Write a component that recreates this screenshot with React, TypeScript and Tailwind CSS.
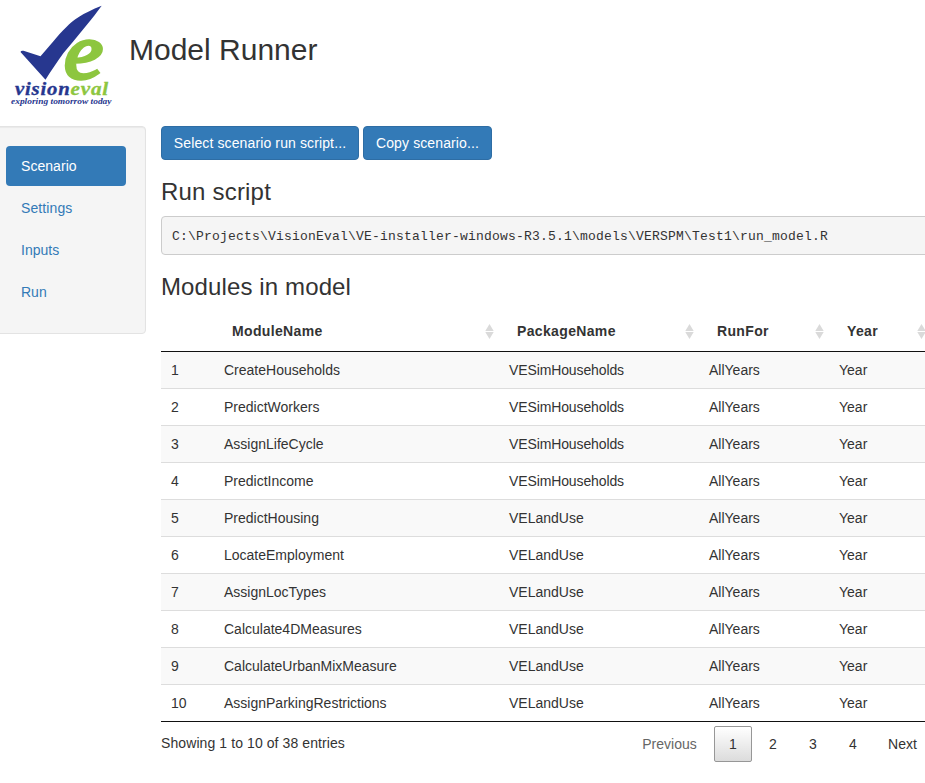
const modules: [string, string][] = [
  ["CreateHouseholds", "VESimHouseholds"],
  ["PredictWorkers", "VESimHouseholds"],
  ["AssignLifeCycle", "VESimHouseholds"],
  ["PredictIncome", "VESimHouseholds"],
  ["PredictHousing", "VELandUse"],
  ["LocateEmployment", "VELandUse"],
  ["AssignLocTypes", "VELandUse"],
  ["Calculate4DMeasures", "VELandUse"],
  ["CalculateUrbanMixMeasure", "VELandUse"],
  ["AssignParkingRestrictions", "VELandUse"],
];

const grid = "grid grid-cols-[53px_285px_200px_130px_102px]";

function Logo() {
  return (
    <svg width="120" height="110" viewBox="0 0 120 110" className="shrink-0 font-['Liberation_Serif',serif]">
      <path
        fill="#27378f"
        d="M101.7 5.8C97 12 92 19 86.7 25L73 41.7L63.5 53C57 62 51 71 45.5 79.7L20.5 52Q21 50.3 23.5 50.8L40.5 56.3L53 41.7C57 37 62 31 66.7 26.7C73 20.5 82 13.5 101.7 5.8Z"
      />
      <text x="64" y="77.5" fontSize="79" fontStyle="italic" fill="#8dc63f" stroke="#8dc63f" strokeWidth="3.5" textLength="39" lengthAdjust="spacingAndGlyphs">e</text>
      <text x="15" y="94.7" fontSize="18.5" fontWeight="bold" fontStyle="italic" fill="#27378f" stroke="#27378f" strokeWidth="0.3" letterSpacing="0.7" textLength="55.5" lengthAdjust="spacingAndGlyphs">vision</text>
      <text x="70.5" y="94.7" fontSize="18.5" fontWeight="bold" fontStyle="italic" fill="#8dc63f" stroke="#8dc63f" strokeWidth="0.3" letterSpacing="0.7" textLength="38.5" lengthAdjust="spacingAndGlyphs">eval</text>
      <text x="11" y="103.7" fontSize="9" fontWeight="bold" fontStyle="italic" fill="#27378f" textLength="100.5" lengthAdjust="spacingAndGlyphs">exploring tomorrow today</text>
    </svg>
  );
}

function HeadCell({ label }: { label: string }) {
  return (
    <div className="flex items-center justify-between pl-[18px] pr-[5px]">
      <span>{label}</span>
      <svg width="9" height="15" viewBox="0 0 9 15" fill="#dadada">
        <path d="M4.5 0L8.7 7H0.3Z M0.3 8H8.7L4.5 15Z" />
      </svg>
    </div>
  );
}

export default function App() {
  return (
    <div className="h-[783px] w-[925px] overflow-hidden bg-white font-['Liberation_Sans',Arial,sans-serif] text-[14px] leading-[20px] text-[#333333]">
      <header className="flex h-[126px]">
        <Logo />
        <h1 className="ml-[9px] mt-[33px] text-[30px] leading-[33px]">Model Runner</h1>
      </header>
      <div className="flex items-start">
        <nav className="-ml-[14px] flex h-[208px] w-[160px] shrink-0 flex-col gap-[2px] rounded border border-[#e3e3e3] bg-[#f5f5f5] px-[19px] pt-[19px] text-[#337ab7] shadow-[inset_0_1px_1px_rgba(0,0,0,0.05)]">
          <a className="rounded bg-[#337ab7] px-[15px] py-[10px] tracking-[0.05px] text-white">Scenario</a>
          <a className="px-[15px] py-[10px] tracking-[0.1px]">Settings</a>
          <a className="px-[15px] py-[10px]">Inputs</a>
          <a className="px-[15px] py-[10px]">Run</a>
        </nav>
        <main className="ml-[15px] w-[770px] shrink-0">
          <div className="flex gap-[4px] tracking-[0.12px] text-white">
            <button className="h-[34px] w-[198px] whitespace-nowrap rounded border border-[#2e6da4] bg-[#337ab7]">Select scenario run script...</button>
            <button className="h-[34px] w-[129px] whitespace-nowrap rounded border border-[#2e6da4] bg-[#337ab7]">Copy scenario...</button>
          </div>
          <h2 className="mt-[19px] text-[24px] leading-[26px] tracking-[0.2px]">Run script</h2>
          <pre className="mt-[11px] h-[39px] w-[790px] rounded border border-[#cccccc] bg-[#f5f5f5] px-[10px] py-[10px] font-['Liberation_Mono',monospace] text-[13px] leading-[19px] tracking-[0.2px]">C:\Projects\VisionEval\VE-installer-windows-R3.5.1\models\VERSPM\Test1\run_model.R</pre>
          <h2 className="mt-[19px] text-[24px] leading-[26px] tracking-[0.12px]">Modules in model</h2>
          <div className="mt-[11px] border-b border-[#111111]">
            <div className={`${grid} h-[41px] border-b border-[#111111] font-bold tracking-[0.35px]`}>
              <div />
              <HeadCell label="ModuleName" />
              <HeadCell label="PackageName" />
              <HeadCell label="RunFor" />
              <HeadCell label="Year" />
            </div>
            {modules.map(([name, pkg], i) => (
              <div
                key={name}
                className={`${grid} items-center border-[#dddddd] ${i === 0 ? "h-[36px]" : "h-[37px] border-t"} ${i % 2 === 0 ? "bg-[#f9f9f9]" : "bg-white"}`}
              >
                <span className="pl-[10px]">{i + 1}</span>
                <span className="pl-[10px]">{name}</span>
                <span className={`pl-[10px] ${pkg === "VELandUse" ? "" : "-tracking-[0.12px]"}`}>{pkg}</span>
                <span className="pl-[10px]">AllYears</span>
                <span className="pl-[10px]">Year</span>
              </div>
            ))}
          </div>
          <div className="flex items-start justify-between pt-[4px]">
            <span className="pt-[7px] tracking-[0.09px]">Showing 1 to 10 of 38 entries</span>
            <div className="flex gap-[2px] leading-[36px]">
              <span className="w-[83px] pr-[2px] text-center text-[#666666]">Previous</span>
              <span className="h-[36px] w-[38px] rounded-[2px] border border-[#979797] bg-linear-to-b from-white to-[#dcdcdc] text-center leading-[34px]">1</span>
              <span className="w-[38px] text-center">2</span>
              <span className="w-[38px] text-center">3</span>
              <span className="w-[38px] text-center">4</span>
              <span className="w-[57px] text-center">Next</span>
            </div>
          </div>
        </main>
      </div>
    </div>
  );
}
